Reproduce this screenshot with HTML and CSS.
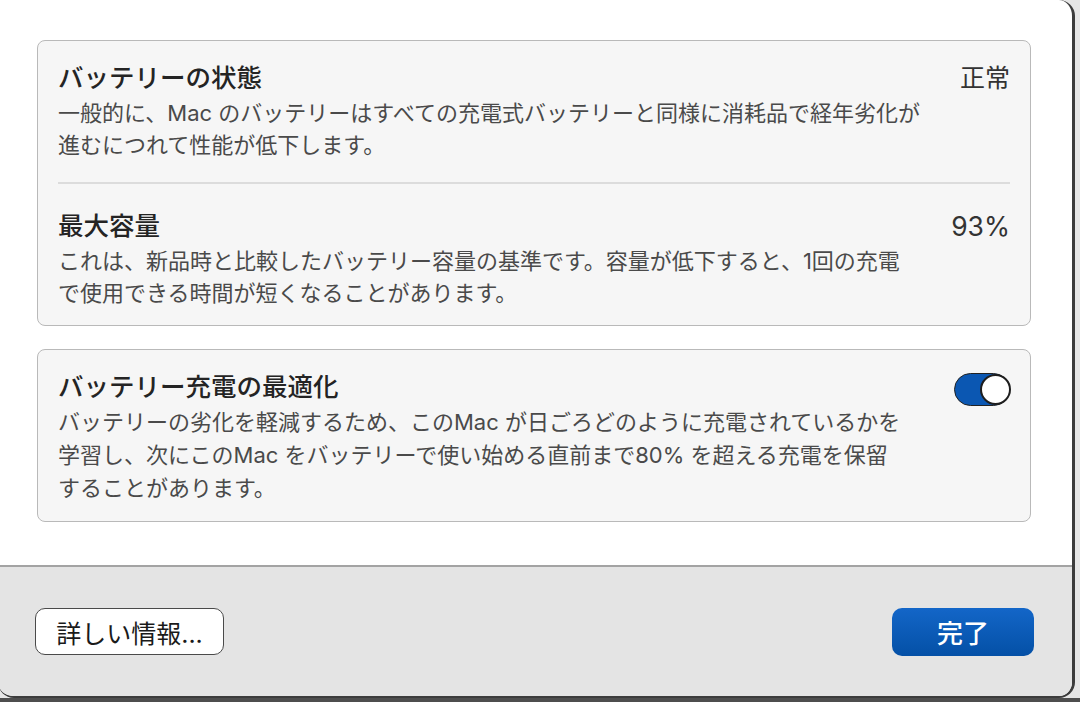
FILE: index.html
```html
<!DOCTYPE html>
<html lang="ja">
<head>
<meta charset="utf-8">
<link rel="stylesheet" href="styles.css">
</head>
<body>
<div class="screen">
  <div class="window">
    <div class="content">
      <div class="card">
        <div class="row row-a">
          <div class="text">
            <div class="title">バッテリーの状態</div>
            <div class="desc">一般的に、Mac のバッテリーはすべての充電式バッテリーと同様に消耗品で経年劣化が<br>進むにつれて性能が低下します。</div>
          </div>
          <div class="value">正常</div>
        </div>
        <div class="sep"></div>
        <div class="row row-b">
          <div class="text">
            <div class="title">最大容量</div>
            <div class="desc">これは、新品時と比較したバッテリー容量の基準です。容量が低下すると、1回の充電<br>で使用できる時間が短くなることがあります。</div>
          </div>
          <div class="value value-num">93%</div>
        </div>
      </div>
      <div class="card card-2">
        <div class="row row-c">
          <div class="text">
            <div class="title">バッテリー充電の最適化</div>
            <div class="desc desc-tall">バッテリーの劣化を軽減するため、このMac が日ごろどのように充電されているかを<br>学習し、次にこのMac をバッテリーで使い始める直前まで80% を超える充電を保留<br>することがあります。</div>
          </div>
          <div class="toggle"><div class="knob"></div></div>
        </div>
      </div>
    </div>
    <div class="footer">
      <button class="btn btn-plain">詳しい情報...</button>
      <button class="btn btn-primary">完了</button>
    </div>
  </div>
  <div class="desk"></div>
</div>
</body>
</html>
```
FILE: styles.css
```css
html, body {
  margin: 0;
  padding: 0;
}
body {
  width: 1080px;
  height: 702px;
  overflow: hidden;
  background: #e6e6e6;
  font-family: Inter, "Noto Sans CJK JP", "Noto Sans", sans-serif;
}
.screen {
  display: flex;
  flex-direction: column;
  height: 702px;
}
.window {
  width: 1074px;
  height: 696px;
  margin-left: -2px;
  background: #ffffff;
  border-right: 3px solid #3c3c3c;
  border-bottom: 2px solid #3c3c3c;
  border-top-right-radius: 16px;
  border-bottom-right-radius: 16px;
  border-bottom-left-radius: 16px;
  overflow: hidden;
  display: flex;
  flex-direction: column;
  box-sizing: content-box;
}
.desk {
  flex: 1;
  background: #4e4e4e;
}
.content {
  height: 567px;
  box-sizing: border-box;
  padding: 40px 0 0 39px;
  display: flex;
  flex-direction: column;
  gap: 23px;
  border-bottom: 2px solid #a3a3a3;
}
.card {
  width: 994px;
  box-sizing: border-box;
  background: #f6f6f6;
  border: 1.5px solid #b9b9b9;
  border-radius: 8px;
}
.row {
  display: flex;
  justify-content: space-between;
  align-items: flex-start;
  padding: 0 20px;
}
.row-a { padding-top: 20px; padding-bottom: 21px; }
.row-b { padding-top: 25px; padding-bottom: 16px; }
.row-c { padding-top: 20px; padding-bottom: 16px; }
.sep {
  height: 2px;
  background: #dcdcdc;
  margin: 0 20px;
}
.title {
  font-size: 25.5px;
  line-height: 34px;
  font-weight: 500;
  color: #242424;
  margin-bottom: 2px;
}
.desc {
  font-size: 22px;
  line-height: 32px;
  color: #4a4a4a;
}
.desc-tall {
  line-height: 33px;
}
.value {
  font-size: 25px;
  line-height: 34px;
  color: #333333;
}
.value-num {
  font-size: 26.5px;
}
.toggle {
  width: 56px;
  height: 33px;
  box-sizing: border-box;
  margin-top: 3px;
  border: 1.5px solid #222;
  border-radius: 17px;
  background: #0b57b2;
  display: flex;
  justify-content: flex-end;
  align-items: center;
}
.knob {
  width: 31px;
  height: 31px;
  box-sizing: border-box;
  border-radius: 50%;
  background: #ffffff;
  border: 2px solid #1e1e1e;
  margin-right: -1.5px;
}
.footer {
  flex: 1;
  background: #e4e4e4;
  display: flex;
  justify-content: space-between;
  align-items: center;
  padding: 0 38px 0 37px;
}
.btn {
  font-family: Inter, "Noto Sans CJK JP", sans-serif;
  height: 48px;
  border-radius: 10px;
  font-size: 25px;
  padding: 0;
  margin: 0;
}
.btn-plain {
  width: 189px;
  background: #ffffff;
  color: #1a1a1a;
  border: 1.5px solid #4a4a4a;
  height: 47px;
}
.btn-primary {
  width: 142px;
  background: linear-gradient(#1366c8, #0450a6);
  color: #ffffff;
  border: none;
  font-size: 26px;
  font-weight: 500;
}
```
